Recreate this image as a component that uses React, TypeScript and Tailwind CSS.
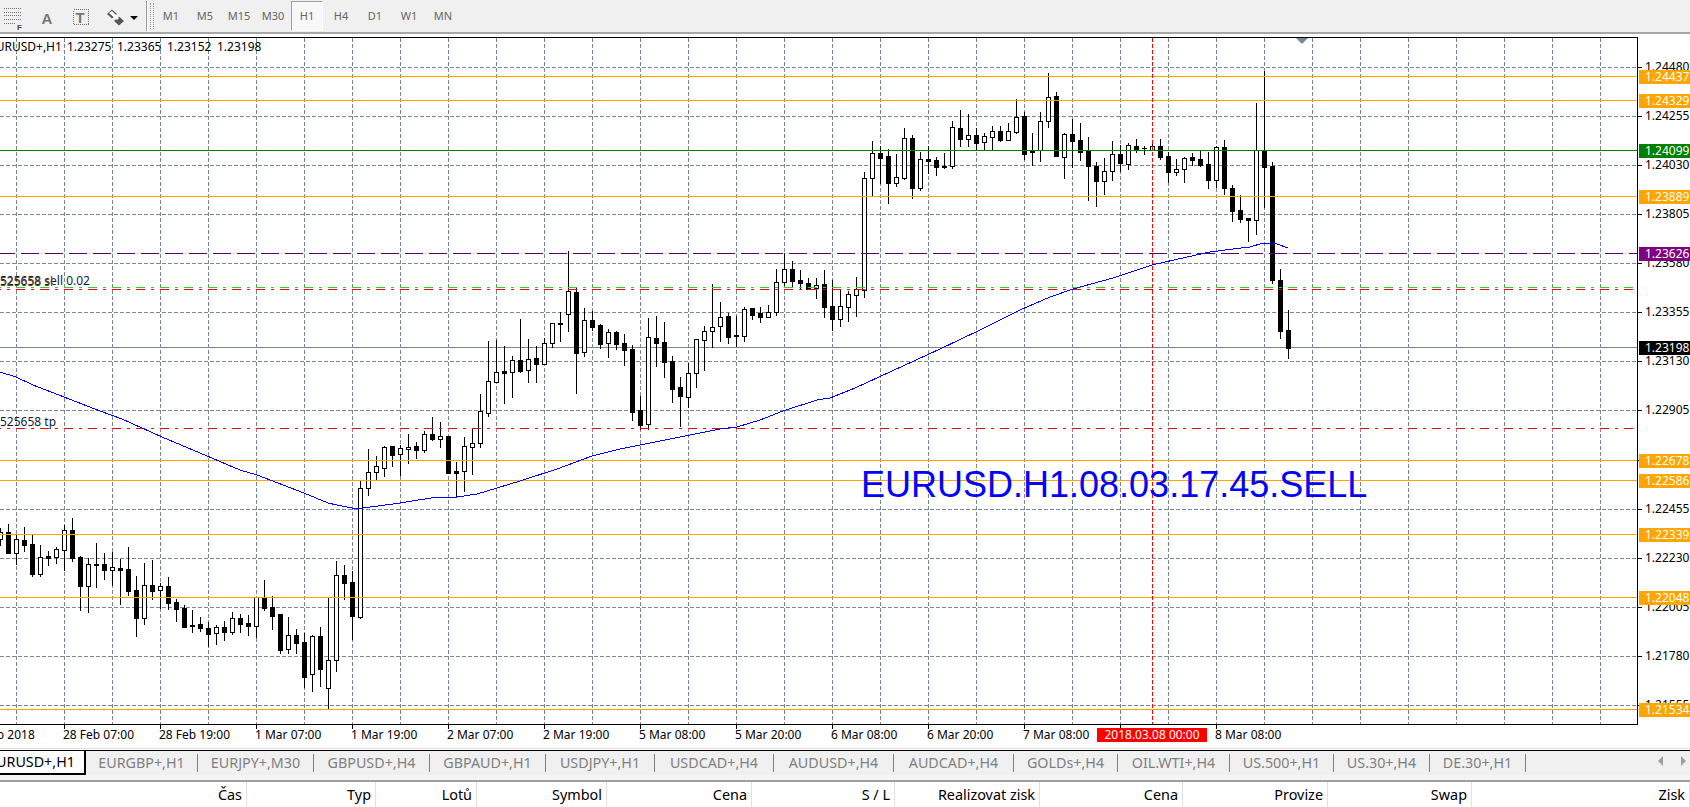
// MT4 style chart window, pixel data read off the screenshot
const font = { fontFamily: '"Noto Sans", "Liberation Sans", sans-serif' };

// [high, bodyTop, bodyBottom, low, white] per bar, 8px apart starting at x=0
const bars: number[][] = [
  [528, 532, 539, 545, 1], [524, 532, 553, 553, 0], [535, 539, 553, 564, 1], [527, 540, 545, 551, 0],
  [535, 544, 574, 576, 0], [545, 557, 574, 576, 1], [551, 556, 558, 565, 0], [547, 549, 557, 563, 1],
  [525, 530, 550, 570, 1], [518, 530, 558, 561, 0], [556, 557, 586, 610, 0], [558, 564, 586, 612, 1],
  [543, 564, 565, 587, 0], [553, 564, 570, 579, 0], [552, 567, 570, 585, 1], [559, 568, 570, 604, 0],
  [547, 569, 591, 595, 0], [576, 590, 618, 636, 0], [563, 585, 618, 624, 1], [560, 585, 591, 599, 0],
  [583, 586, 590, 608, 1], [577, 586, 603, 609, 0], [599, 602, 609, 621, 0], [605, 608, 627, 627, 0],
  [610, 625, 626, 632, 0], [617, 624, 628, 631, 0], [622, 628, 634, 646, 0], [625, 627, 633, 644, 1],
  [621, 627, 632, 640, 0], [612, 618, 632, 634, 1], [614, 618, 624, 632, 0], [615, 623, 626, 635, 0],
  [597, 597, 626, 637, 1], [580, 598, 608, 610, 0], [596, 607, 616, 629, 0], [614, 614, 650, 653, 0],
  [617, 635, 649, 653, 1], [629, 635, 643, 653, 0], [633, 642, 677, 687, 0], [635, 636, 674, 691, 1],
  [627, 636, 669, 686, 0], [597, 660, 688, 708, 1], [561, 575, 660, 671, 1], [565, 575, 583, 599, 0],
  [571, 582, 616, 639, 0], [481, 488, 617, 618, 1], [449, 472, 488, 495, 1], [456, 466, 472, 479, 1],
  [446, 447, 468, 476, 1], [446, 446, 455, 466, 0], [445, 448, 454, 475, 1], [434, 447, 449, 463, 1],
  [442, 446, 450, 458, 0], [431, 434, 450, 452, 1], [417, 434, 439, 440, 0], [422, 436, 439, 447, 1],
  [436, 436, 473, 473, 0], [462, 471, 473, 496, 0], [437, 446, 471, 491, 1], [428, 443, 447, 474, 1],
  [394, 411, 443, 447, 1], [341, 381, 413, 416, 1], [340, 372, 382, 382, 1], [346, 371, 373, 403, 0],
  [356, 360, 372, 397, 1], [319, 360, 371, 372, 0], [339, 359, 370, 382, 1], [346, 358, 364, 382, 0],
  [338, 343, 364, 364, 1], [323, 323, 343, 347, 1], [312, 323, 324, 341, 0], [251, 291, 314, 331, 1],
  [288, 292, 353, 393, 0], [308, 320, 352, 356, 1], [311, 320, 327, 330, 0], [324, 325, 344, 348, 0],
  [329, 332, 343, 357, 1], [331, 332, 344, 349, 0], [334, 343, 350, 365, 0], [345, 349, 412, 420, 0],
  [396, 410, 425, 429, 0], [318, 337, 424, 429, 1], [316, 338, 343, 366, 0], [322, 342, 362, 377, 0],
  [356, 361, 389, 402, 0], [377, 387, 396, 426, 0], [363, 373, 397, 407, 1], [339, 339, 373, 387, 1],
  [326, 331, 340, 370, 1], [284, 327, 331, 347, 1], [302, 317, 326, 341, 1], [313, 316, 337, 343, 0],
  [316, 335, 336, 346, 0], [307, 309, 336, 341, 1], [308, 308, 315, 319, 0], [307, 313, 317, 322, 0],
  [305, 312, 317, 317, 1], [269, 282, 312, 315, 1], [253, 269, 282, 285, 1], [261, 269, 281, 287, 0],
  [270, 280, 283, 289, 0], [278, 283, 289, 289, 0], [278, 285, 288, 298, 1], [270, 284, 307, 317, 0],
  [280, 306, 319, 330, 0], [289, 306, 319, 326, 1], [291, 294, 307, 321, 1], [277, 289, 295, 316, 1],
  [172, 178, 290, 297, 1], [141, 153, 178, 195, 1], [146, 153, 158, 183, 0], [149, 156, 183, 203, 0],
  [154, 177, 183, 186, 1], [128, 138, 178, 179, 1], [135, 138, 188, 198, 0], [152, 159, 188, 190, 1],
  [146, 159, 161, 173, 0], [157, 160, 167, 175, 0], [153, 166, 167, 168, 0], [121, 127, 166, 168, 1],
  [110, 128, 139, 146, 0], [114, 135, 139, 146, 1], [128, 135, 143, 150, 0], [133, 136, 142, 150, 1],
  [126, 131, 137, 150, 1], [126, 131, 140, 141, 0], [123, 131, 140, 140, 1], [99, 117, 132, 133, 1],
  [112, 116, 154, 159, 0], [133, 151, 152, 165, 1], [112, 121, 150, 161, 1], [73, 97, 121, 127, 1],
  [92, 96, 156, 156, 0], [133, 134, 157, 178, 1], [119, 134, 141, 167, 0], [123, 140, 152, 160, 0],
  [137, 151, 166, 200, 0], [162, 166, 181, 206, 0], [158, 171, 181, 194, 1], [141, 154, 171, 180, 1],
  [145, 154, 163, 171, 0], [143, 145, 164, 169, 1], [139, 146, 150, 152, 0], [146, 148, 148, 154, 0],
  [141, 146, 150, 150, 1], [139, 146, 157, 159, 0], [152, 156, 172, 182, 0], [159, 169, 172, 175, 1],
  [157, 158, 169, 182, 1], [153, 157, 160, 165, 0], [151, 159, 165, 166, 0], [152, 164, 180, 188, 0],
  [146, 147, 180, 187, 1], [140, 147, 188, 194, 0], [185, 188, 211, 221, 0], [195, 210, 219, 222, 0],
  [218, 218, 220, 241, 0], [103, 150, 220, 234, 1], [71, 151, 167, 207, 0], [162, 166, 280, 283, 0],
  [269, 280, 331, 338, 0], [310, 330, 348, 358, 0],
];

const ma =
  "0,372 16,377 33,385 64,397 100,411 122,419 162,437 200,453 240,470 257,475 304,493 328,503 337,505 352,508 363,508 400,503 437,497 457,497 477,494 497,488 520,481 557,469 592,456 620,449 720,429 737,427 760,420 783,411 817,400 830,398 855,388 940,349 980,330 1020,310 1050,297 1073,289 1113,278 1152,265 1187,257 1210,252 1233,249 1250,247 1263,243 1277,244 1288,248";

const gridY = [67, 116, 165, 214, 263, 312, 361, 410, 460, 509, 558, 607, 656, 705];
const gridX = Array.from({ length: 34 }, (_, i) => 16 + i * 48);

const axisPrices = ["1.24480", "1.24255", "1.24030", "1.23805", "1.23580", "1.23355", "1.23130", "1.22905", "1.22680", "1.22455", "1.22230", "1.22005", "1.21780", "1.21555"];

const levels = [
  { y: 76, text: "1.24437", color: "#ffa500" },
  { y: 100, text: "1.24329", color: "#ffa500" },
  { y: 150, text: "1.24099", color: "#008000" },
  { y: 196, text: "1.23889", color: "#ffa500" },
  { y: 253, text: "1.23626", color: "#800080" },
  { y: 347, text: "1.23198", color: "#000000" },
  { y: 460, text: "1.22678", color: "#ffa500" },
  { y: 480, text: "1.22586", color: "#ffa500" },
  { y: 534, text: "1.22339", color: "#ffa500" },
  { y: 597, text: "1.22048", color: "#ffa500" },
  { y: 709, text: "1.21534", color: "#ffa500" },
];

const timeLabels = [
  [64, "28 Feb 07:00"], [160, "28 Feb 19:00"], [256, "1 Mar 07:00"], [352, "1 Mar 19:00"], [448, "2 Mar 07:00"],
  [544, "2 Mar 19:00"], [640, "5 Mar 08:00"], [736, "5 Mar 20:00"], [832, "6 Mar 08:00"], [928, "6 Mar 20:00"],
  [1024, "7 Mar 08:00"], [1216, "8 Mar 08:00"],
] as [number, string][];

const periods = ["M1", "M5", "M15", "M30", "H1", "H4", "D1", "W1", "MN"];

const tabs = [
  ["EURGBP+,H1", "w-[112px]"], ["EURJPY+,M30", "w-[116px]"], ["GBPUSD+,H4", "w-[116px]"], ["GBPAUD+,H1", "w-[116px]"],
  ["USDJPY+,H1", "w-[109px]"], ["USDCAD+,H4", "w-[119px]"], ["AUDUSD+,H4", "w-[120px]"], ["AUDCAD+,H4", "w-[120px]"],
  ["GOLDs+,H4", "w-[104px]"], ["OIL.WTI+,H4", "w-[112px]"], ["US.500+,H1", "w-[104px]"], ["US.30+,H4", "w-[96px]"], ["DE.30+,H1", "w-[96px]"],
];

const columns = [
  ["Čas", "w-[247px]"], ["Typ", "w-[129px]"], ["Lotů", "w-[101px]"], ["Symbol", "w-[130px]"], ["Cena", "w-[145px]"],
  ["S / L", "w-[143px]"], ["Realizovat zisk", "w-[145px]"], ["Cena", "w-[143px]"], ["Provize", "w-[145px]"], ["Swap", "w-[144px]"], ["Zisk", "flex-1"],
];

function Toolbar() {
  return (
    <div className="flex h-[34px] items-center border-b-2 border-[#a8a8a8] bg-[#f0f0f0]">
      <svg width="146" height="32" viewBox="0 0 146 32" className="shrink-0">
        <g stroke="#707070" strokeDasharray="1 1" shapeRendering="crispEdges">
          <path d="M4 8.5h18M4 12.5h18M4 15.5h18M4 19.5h18M4 23.5h12" />
          <rect x="73.5" y="9.5" width="15" height="15" fill="none" />
        </g>
        <text x="17" y="29.5" fontSize="8" fontWeight="700" fill="#444" fontFamily="Liberation Sans">F</text>
        <text x="41.5" y="24" fontSize="15" fontWeight="700" fill="#777" fontFamily="Liberation Sans">A</text>
        <text x="75.5" y="22.5" fontSize="15" fontWeight="700" fill="#777" fontFamily="Liberation Sans">T</text>
        <path d="M112 9.5l5 4.5-5 4.5-5-4.5z" fill="#555" />
        <path d="M119 16.5l5 4.5-5 4.5-5-4.5z" fill="#555" />
        <path d="M109 13l8 7 2-2-7-7z" fill="#fff" />
        <path d="M130 16h8l-4 4z" fill="#000" />
      </svg>
      <div className="h-[30px] w-[2px] shrink-0 border-l border-[#a0a0a0] bg-white" />
      <div className="ml-[2px] h-[26px] w-[4px] shrink-0 border-x border-dotted border-[#999]" />
      <div className="flex" style={font}>
        {periods.map((p) => (
          <div
            key={p}
            className={
              p === "H1"
                ? "mx-[1px] flex h-[30px] w-[32px] items-center justify-center border border-b-white border-r-white border-[#a0a0a0] bg-[#f8f8f8] text-[11px] text-[#666]"
                : "flex h-[30px] w-[34px] items-center justify-center text-[11px] text-[#666]"
            }
          >
            {p}
          </div>
        ))}
      </div>
    </div>
  );
}

function Chart() {
  return (
    <svg width="1690" height="714" viewBox="0 34 1690 714" className="block" shapeRendering="crispEdges">
      <g stroke="#778899" strokeDasharray="4 2">
        {gridX.map((x) => <line key={x} x1={x + 0.5} x2={x + 0.5} y1="38" y2="724" />)}
        {gridY.map((y) => <line key={y} x1="0" x2="1637" y1={y + 0.5} y2={y + 0.5} />)}
      </g>
      <line x1="0" x2="1637" y1="347.5" y2="347.5" stroke="#778899" />

      {bars.map(([high, top, bottom, low, white], i) => {
        const x = i * 8;
        return (
          <g key={i}>
            <line x1={x + 0.5} x2={x + 0.5} y1={high} y2={low + 1} stroke="#000" />
            {white ? (
              <rect x={x - 1.5} y={top + 0.5} width="4" height={bottom - top} fill="#fff" stroke="#000" />
            ) : (
              <rect x={x - 2} y={top} width="5" height={bottom - top + 1} fill="#000" />
            )}
          </g>
        );
      })}

      {[76, 100, 196, 460, 480, 534, 597, 709].map((y) => (
        <line key={y} x1="0" x2="1637" y1={y + 0.5} y2={y + 0.5} stroke="#ffa500" />
      ))}
      <line x1="0" x2="1637" y1="150.5" y2="150.5" stroke="#008000" />
      <line x1="0" x2="1637" y1="253.5" y2="253.5" stroke="#5c0070" strokeDasharray="18 6" strokeDashoffset="3" />
      <line x1="0" x2="1637" y1="287.5" y2="287.5" stroke="#32cd32" strokeDasharray="9 6 3 6" strokeDashoffset="8" />
      <line x1="0" x2="1637" y1="289.5" y2="289.5" stroke="#ff0000" strokeDasharray="9 6 3 6" strokeDashoffset="8" />
      <line x1="0" x2="1637" y1="428.5" y2="428.5" stroke="#ff0000" strokeDasharray="9 6 3 6" strokeDashoffset="8" />
      <line x1="1152.5" x2="1152.5" y1="38" y2="724" stroke="#ff0000" strokeDasharray="4 2" />
      <polyline points={ma} fill="none" stroke="#0000ff" />

      {/* frame, ticks */}
      <path d="M0 37.5H1637.5V724.5H0" fill="none" stroke="#000" />
      {gridY.map((y) => <line key={y} x1="1638" x2="1642" y1={y + 0.5} y2={y + 0.5} stroke="#000" />)}
      {[...timeLabels.map(([x]) => x), 1120].map((x) => <line key={x} x1={x + 0.5} x2={x + 0.5} y1="725" y2="729" stroke="#000" />)}
      <path d="M1296 38h12l-6 6z" fill="#778899" shapeRendering="auto" />
    </svg>
  );
}

export default function App() {
  return (
    <div className="flex h-[807px] w-[1690px] flex-col overflow-hidden bg-white" style={font}>
      <Toolbar />

      <div className="relative h-[714px] shrink-0">
        <Chart />
        <div className="absolute left-[-11px] top-[5px] flex whitespace-nowrap text-[12px] leading-[16px] text-black">
          <span className="w-[78px]">EURUSD+,H1</span>
          <span className="w-[50px]">1.23275</span>
          <span className="w-[50px]">1.23365</span>
          <span className="w-[50px]">1.23152</span>
          <span className="w-[50px]">1.23198</span>
        </div>

        <span className="absolute left-[0px] top-[239px] whitespace-nowrap text-[12px] leading-[16px] text-[#141c3a]">525658 sell 0.02</span>
        <span className="absolute left-[0px] top-[240px] whitespace-nowrap text-[12px] leading-[16px] text-[#5a4a2a]">525658 sl</span>
        <span className="absolute left-[0px] top-[380px] whitespace-nowrap text-[12px] leading-[16px] text-[#141c3a]">525658 tp</span>

        <span className="absolute left-[861px] top-[430px] whitespace-nowrap text-[36px] leading-[42px] text-[#0000ff]" style={{ fontFamily: '"Liberation Sans", sans-serif' }}>
          EURUSD.H1.08.03.17.45.SELL
        </span>

        {/* price scale */}
        {axisPrices.map((p, i) => (
          <span key={p} className="absolute left-[1645px] whitespace-nowrap text-[12px] leading-[14px] text-black" style={{ top: gridY[i] - 34 - 7 }}>
            {p}
          </span>
        ))}
        {levels.map((l) => (
          <span
            key={l.text}
            className="absolute left-[1639px] h-[14px] w-[51px] pl-[6px] text-[12px] leading-[14px] text-white"
            style={{ top: l.y - 34 - 6, backgroundColor: l.color }}
          >
            {l.text}
          </span>
        ))}

        {/* time scale */}
        <span className="absolute left-[-33px] top-[693px] whitespace-nowrap text-[12px] leading-[16px] text-black">27 Feb 2018</span>
        {timeLabels.map(([x, t]) => (
          <span key={t} className="absolute top-[693px] whitespace-nowrap text-[12px] leading-[16px] text-black" style={{ left: x - 1 }}>
            {t}
          </span>
        ))}
        <span className="absolute left-[1097px] top-[694px] h-[14px] w-[110px] bg-[#ff0000] text-center text-[12px] leading-[14px] text-white">
          2018.03.08 00:00
        </span>
      </div>

      <div className="h-[2px] shrink-0 border-t border-[#e0e0e0]" />

      <div className="flex h-[25px] shrink-0 items-stretch border-t border-black bg-[#f0f0f0] py-[3px] text-[14.3px] text-[#808080]">
        <div className="-my-[3px] ml-[-21px] flex w-[107px] items-center justify-center border-b-2 border-r-2 border-black bg-white text-black">EURUSD+,H1</div>
        {tabs.map(([name, width]) => (
          <div key={name} className={"flex items-center justify-center border-r border-[#808080] " + width}>{name}</div>
        ))}
        <div className="relative flex-1">
          <svg width="164" height="18" viewBox="0 0 164 18" className="absolute inset-0">
            <path d="M137 2v10l-5-5zM155 2v10l5-5z" fill="#a0a0a0" />
          </svg>
        </div>
      </div>

      <div className="h-[5px] shrink-0 bg-[#f5f5f5]" />

      <div className="flex flex-1 border-t-2 border-[#a0a0a0] text-[14.4px] text-black">
        {columns.map(([label, width], i) => (
          <div key={i} className={"flex items-center justify-end border-r border-[#e0e0e0] pr-[4px] " + width}>{label}</div>
        ))}
      </div>
    </div>
  );
}
